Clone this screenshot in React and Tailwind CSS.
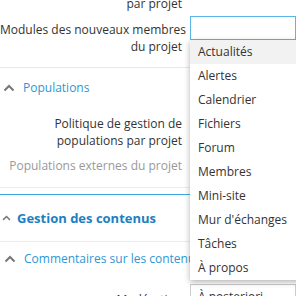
import React from 'react';

const modules = [
  'Actualités',
  'Alertes',
  'Calendrier',
  'Fichiers',
  'Forum',
  'Membres',
  'Mini-site',
  "Mur d'échanges",
  'Tâches',
  'À propos',
];

const Chevron = ({ className }) => (
  <svg viewBox="0 0 12 8" className={className} fill="none">
    <path d="M1.5 6.5 L6 2 L10.5 6.5" stroke="currentColor" strokeWidth="2" />
  </svg>
);

const Label = ({ children, className = '' }) => (
  <div className={`w-[182px] shrink-0 text-right leading-[17px] whitespace-nowrap ${className}`}>{children}</div>
);

export default function App() {
  return (
    <div className="relative w-[296px] h-[296px] overflow-hidden bg-white font-['Open_Sans',sans-serif] text-[12px] text-[#333]">
      <div className="-mt-[5px]">
        {/* fin du champ précédent */}
        <div className="flex">
          <Label>par projet</Label>
        </div>

        {/* Modules des nouveaux membres */}
        <div className="mt-[4px] flex items-start gap-[8px] pb-[12px] border-b border-[#e8e8e8]">
          <Label className="pt-[5px]">
            Modules des nouveaux membres
            <br />
            du projet
          </Label>
          <div className="h-[24px] flex-1 border border-[#5ab6e6] bg-white" />
        </div>

        {/* Populations */}
        <div className="flex items-center gap-[8px] pl-[3px] pt-[11px] leading-[18px] text-[12px] text-[#2e97d3]">
          <Chevron className="w-[12px] h-[8px] text-[#777]" />
          <span>Populations</span>
        </div>
        <div className="mt-[18px] flex">
          <Label>
            Politique de gestion de
            <br />
            populations par projet
          </Label>
        </div>
        <div className="mt-[8px] flex pb-[13px] border-b border-[#ececec]">
          <Label className="text-[#999]">Populations externes du projet</Label>
        </div>

        {/* Gestion des contenus */}
        <div className="mt-[6px] border-t border-[#3aa8e0] pt-[13px] pb-[13px] border-b-[1px] border-b-[#ececec]">
          <div className="flex items-center gap-[6px] pl-[2px] leading-[20px] text-[13px] font-bold text-[#1d80bf]">
            <Chevron className="w-[9px] h-[6px] text-[#777]" />
            <span>Gestion des contenus</span>
          </div>
        </div>

        {/* Commentaires sur les contenus */}
        <div className="flex items-center gap-[8px] pl-[4px] pt-[8px] leading-[18px] text-[12px] text-[#2e97d3] whitespace-nowrap">
          <Chevron className="w-[12px] h-[8px] shrink-0 text-[#777]" />
          <span>Commentaires sur les contenus</span>
        </div>
        <div className="mt-[16px] flex items-start gap-[8px]">
          <Label className="pt-[7px]">Modération</Label>
          <div className="h-[24px] flex-1 border border-[#ccc] px-[7px] leading-[24px] whitespace-nowrap">À posteriori</div>
        </div>
      </div>

      {/* liste déroulante */}
      <ul className="absolute left-[190px] top-[40px] w-[130px] bg-white shadow-[0_2px_6px_rgba(0,0,0,0.3)] text-[12px]">
        {modules.map((m, i) => (
          <li
            key={m}
            className={`h-[24px] pl-[8px] leading-[24px] whitespace-nowrap ${i === 0 ? 'bg-[#f2f2f2]' : ''}`}
          >
            {m}
          </li>
        ))}
      </ul>
    </div>
  );
}
